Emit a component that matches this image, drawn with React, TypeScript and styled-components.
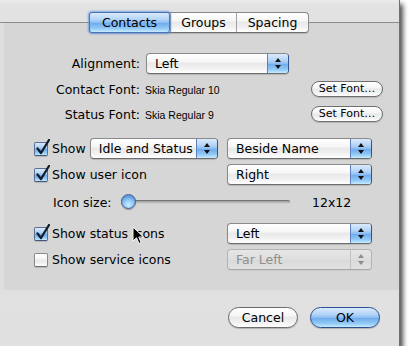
import React from 'react';
import styled, { createGlobalStyle, css } from 'styled-components';

const Global = createGlobalStyle`
  html, body { margin: 0; padding: 0; background: #ffffff; }
  body {
    font-family: 'DejaVu Sans', 'Liberation Sans', sans-serif;
    font-size: 12.5px;
    color: #000;
  }
`;

const whiteGloss = css`
  background: linear-gradient(
    to bottom,
    #ffffff 0%,
    #f6f6f6 40%,
    #e9e9e9 50%,
    #f1f1f1 75%,
    #ffffff 100%
  );
`;

const blueGloss = css`
  background: linear-gradient(
    to bottom,
    #dbeafc 0%,
    #b2d3f7 35%,
    #8dbdf1 50%,
    #6eaaec 52%,
    #8fc7f6 80%,
    #c6ecfe 100%
  );
`;

const Window = styled.div`
  position: relative;
  width: 400px;
  height: 346px;
  box-sizing: border-box;
  border-right: 1px solid #6f6f6f;
  background: linear-gradient(to bottom, #ebebeb 0px, #e2e2e2 5px, #e0e0e0 100%);
  box-shadow: 3px 4px 5px rgba(0, 0, 0, 0.7);
  display: flex;
  flex-direction: column;
`;

const TabBox = styled.div`
  margin-top: 22px;
  height: 268px;
  box-sizing: border-box;
  border-top: 1px solid #8c8c8c;
  background: #d6d6d6;
  box-shadow: inset 4px 0 0 #dedede;
  display: flex;
  flex-direction: column;
`;

const Segmented = styled.div`
  align-self: center;
  margin-top: -11px;
  margin-left: -1px;
  display: flex;
  height: 21px;
  box-sizing: border-box;
  border: 1px solid #8a8a8a;
  border-bottom-color: #6f6f6f;
  border-radius: 4px;
  box-shadow: 0 1px 1px rgba(0, 0, 0, 0.15);
  ${whiteGloss};
`;

const Segment = styled.div<{ $w: number; $active?: boolean; $first?: boolean }>`
  width: ${(p) => p.$w}px;
  display: flex;
  align-items: center;
  justify-content: center;
  box-sizing: border-box;
  line-height: 19px;
  ${(p) => (p.$first ? '' : 'border-left: 1px solid #a3a3a3;')}
  ${(p) =>
    p.$active &&
    css`
      ${blueGloss};
      border-radius: 3px;
      margin: -1px 0 -1px -1px;
      border: 1px solid #4b74b8;
      box-shadow: 0 0 2px 1px rgba(80, 140, 220, 0.7);
      position: relative;
      z-index: 1;
    `}
`;

const FormRow = styled.div<{ $mt: number; $h: number }>`
  display: flex;
  align-items: center;
  margin-top: ${(p) => p.$mt}px;
  height: ${(p) => p.$h}px;
`;

const FieldLabel = styled.div`
  width: 140px;
  text-align: right;
  margin-right: 6px;
  white-space: nowrap;
`;

const FontName = styled.div`
  flex: 1;
  margin-left: -1px;
  font-family: 'Liberation Sans', Arial, sans-serif;
  font-size: 10.5px;
  padding-top: 1px;
`;

const SmallButton = styled.div`
  width: 72px;
  height: 16px;
  margin-right: 16px;
  box-sizing: border-box;
  border: 1px solid #6f6f6f;
  border-radius: 8px;
  ${whiteGloss};
  font-size: 11px;
  line-height: 14px;
  text-align: center;
  box-shadow: 0 1px 1px rgba(0, 0, 0, 0.15);
`;

const PopupBox = styled.div<{ $w: number; $disabled?: boolean; $ml?: number }>`
  width: ${(p) => p.$w}px;
  height: 21px;
  margin-left: ${(p) => (p.$ml !== undefined ? `${p.$ml}px` : '0')};
  box-sizing: border-box;
  display: flex;
  border-radius: 4px;
  overflow: hidden;
  border: 1px solid ${(p) => (p.$disabled ? '#b4b4b4' : '#8a8a8a')};
  border-bottom-color: ${(p) => (p.$disabled ? '#a8a8a8' : '#6c6c6c')};
  ${(p) => !p.$disabled && 'border-right-color: #33528e;'}
  ${(p) =>
    p.$disabled
      ? css`
          background: linear-gradient(to bottom, #e6e6e6 0%, #dedede 50%, #d9d9d9 52%, #e2e2e2 100%);
        `
      : whiteGloss};
  box-shadow: 0 1px 1px rgba(0, 0, 0, ${(p) => (p.$disabled ? 0.05 : 0.15)});
`;

const PopupText = styled.div<{ $disabled?: boolean }>`
  flex: 1;
  padding-left: 8px;
  line-height: 19px;
  white-space: nowrap;
  color: ${(p) => (p.$disabled ? '#8f8f8f' : '#000')};
`;

const PopupArrow = styled.div<{ $disabled?: boolean }>`
  width: 21px;
  display: flex;
  align-items: center;
  justify-content: center;
  box-sizing: border-box;
  border-left: 1px solid ${(p) => (p.$disabled ? '#c2c2c2' : '#5f82bf')};
  ${(p) => (p.$disabled ? '' : blueGloss)};
`;

const ArrowGlyph = ({ disabled }: { disabled?: boolean }) => (
  <svg width="6" height="11" viewBox="0 0 6 11">
    <path d="M3 0 L6 4 L0 4 Z M0 7 L6 7 L3 11 Z" fill={disabled ? '#8c8c8c' : '#111'} />
  </svg>
);

const Popup = ({
  w,
  text,
  disabled,
  ml,
}: {
  w: number;
  text: string;
  disabled?: boolean;
  ml?: number;
}) => (
  <PopupBox $w={w} $disabled={disabled} $ml={ml}>
    <PopupText $disabled={disabled}>{text}</PopupText>
    <PopupArrow $disabled={disabled}>
      <ArrowGlyph disabled={disabled} />
    </PopupArrow>
  </PopupBox>
);

const CheckRow = styled.div<{ $mt: number }>`
  display: flex;
  align-items: center;
  height: 21px;
  margin-top: ${(p) => p.$mt}px;
  padding-left: 34px;
`;

const LeftCell = styled.div`
  width: 193px;
  display: flex;
  align-items: center;
`;

const CheckBoxBox = styled.div<{ $checked?: boolean }>`
  position: relative;
  width: 14px;
  height: 14px;
  box-sizing: border-box;
  border-radius: 2px;
  border: 1px solid ${(p) => (p.$checked ? '#5a6f93' : '#8a8a8a')};
  border-bottom-color: ${(p) => (p.$checked ? '#44577a' : '#707070')};
  ${(p) => (p.$checked ? blueGloss : whiteGloss)};
  box-shadow: 0 1px 1px rgba(0, 0, 0, 0.15);
  flex-shrink: 0;
`;

const CheckMark = styled.svg`
  position: absolute;
  left: 1px;
  top: -4px;
`;

const CheckLabel = styled.span`
  margin-left: 4px;
  white-space: nowrap;
`;

const CheckBox = ({ checked }: { checked?: boolean }) => (
  <CheckBoxBox $checked={checked}>
    {checked && (
      <CheckMark width="14" height="16" viewBox="0 0 14 16">
        <path
          d="M1.5 9.5 L5 14 L13 1"
          stroke="#141c2c"
          strokeWidth="2.3"
          fill="none"
          strokeLinecap="round"
          strokeLinejoin="round"
        />
      </CheckMark>
    )}
  </CheckBoxBox>
);

const SliderRow = styled.div`
  display: flex;
  align-items: center;
  height: 18px;
  margin-top: 8px;
  padding-left: 53px;
`;

const SliderLabel = styled.div`
  width: 68px;
  white-space: nowrap;
`;

const SliderTrack = styled.div`
  position: relative;
  width: 169px;
  height: 18px;
  display: flex;
  align-items: center;
`;

const TrackLine = styled.div`
  margin-left: 7px;
  flex: 1;
  height: 4px;
  border-radius: 2px;
  background: linear-gradient(to bottom, #8d8d8d, #b9b9b9 60%, #d8d8d8);
  box-shadow: inset 0 1px 1px rgba(0, 0, 0, 0.25);
`;

const Knob = styled.div`
  position: absolute;
  left: 0;
  top: 1px;
  width: 15px;
  height: 15px;
  box-sizing: border-box;
  border-radius: 50%;
  border: 1px solid #3e5d95;
  background: radial-gradient(circle at 50% 75%, #c9f0ff 0%, #8cc4f3 45%, #5c97dd 75%, #7eaee8 100%);
  box-shadow: 0 1px 1px rgba(0, 0, 0, 0.3);
`;

const SizeValue = styled.div`
  margin-left: 22px;
`;

const Footer = styled.div`
  flex: 1;
  display: flex;
  justify-content: flex-end;
  align-items: flex-start;
  padding-top: 17px;
  padding-right: 19px;
  gap: 12px;
`;

const PushButton = styled.div<{ $default?: boolean }>`
  width: 70px;
  height: 21px;
  box-sizing: border-box;
  border-radius: 11px;
  border: 1px solid ${(p) => (p.$default ? '#2d4f8f' : '#6b6b6b')};
  ${(p) => (p.$default ? blueGloss : whiteGloss)};
  box-shadow: 0 1px 1px rgba(0, 0, 0, 0.2);
  text-align: center;
  line-height: 19px;
`;

const Cursor = styled.svg`
  position: absolute;
  left: 132px;
  top: 226px;
`;

export default function App() {
  return (
    <>
      <Global />
      <Window>
        <TabBox>
          <Segmented>
            <Segment $w={81} $active $first>
              Contacts
            </Segment>
            <Segment $w={66}>Groups</Segment>
            <Segment $w={72}>Spacing</Segment>
          </Segmented>

          <FormRow $mt={20} $h={21}>
            <FieldLabel>Alignment:</FieldLabel>
            <Popup w={143} text="Left" />
          </FormRow>

          <FormRow $mt={7} $h={16}>
            <FieldLabel>Contact Font:</FieldLabel>
            <FontName>Skia Regular 10</FontName>
            <SmallButton>Set Font…</SmallButton>
          </FormRow>

          <FormRow $mt={9} $h={16}>
            <FieldLabel>Status Font:</FieldLabel>
            <FontName>Skia Regular 9</FontName>
            <SmallButton>Set Font…</SmallButton>
          </FormRow>

          <CheckRow $mt={16}>
            <LeftCell>
              <CheckBox checked />
              <CheckLabel>Show</CheckLabel>
              <Popup w={128} text="Idle and Status" ml={4} />
            </LeftCell>
            <Popup w={145} text="Beside Name" />
          </CheckRow>

          <CheckRow $mt={5}>
            <LeftCell>
              <CheckBox checked />
              <CheckLabel>Show user icon</CheckLabel>
            </LeftCell>
            <Popup w={145} text="Right" />
          </CheckRow>

          <SliderRow>
            <SliderLabel>Icon size:</SliderLabel>
            <SliderTrack>
              <TrackLine />
              <Knob />
            </SliderTrack>
            <SizeValue>12x12</SizeValue>
          </SliderRow>

          <CheckRow $mt={12}>
            <LeftCell>
              <CheckBox checked />
              <CheckLabel>Show status icons</CheckLabel>
            </LeftCell>
            <Popup w={145} text="Left" />
          </CheckRow>

          <CheckRow $mt={5}>
            <LeftCell>
              <CheckBox />
              <CheckLabel>Show service icons</CheckLabel>
            </LeftCell>
            <Popup w={145} text="Far Left" disabled />
          </CheckRow>
        </TabBox>

        <Footer>
          <PushButton>Cancel</PushButton>
          <PushButton $default>OK</PushButton>
        </Footer>

        <Cursor width="13" height="19" viewBox="0 0 13 19">
          <path
            d="M1 1 L1 15 L4.5 11.8 L7 17.5 L9.2 16.6 L6.8 11 L11.5 11 Z"
            fill="#000"
            stroke="#fff"
            strokeWidth="1"
            strokeLinejoin="round"
          />
        </Cursor>
      </Window>
    </>
  );
}
